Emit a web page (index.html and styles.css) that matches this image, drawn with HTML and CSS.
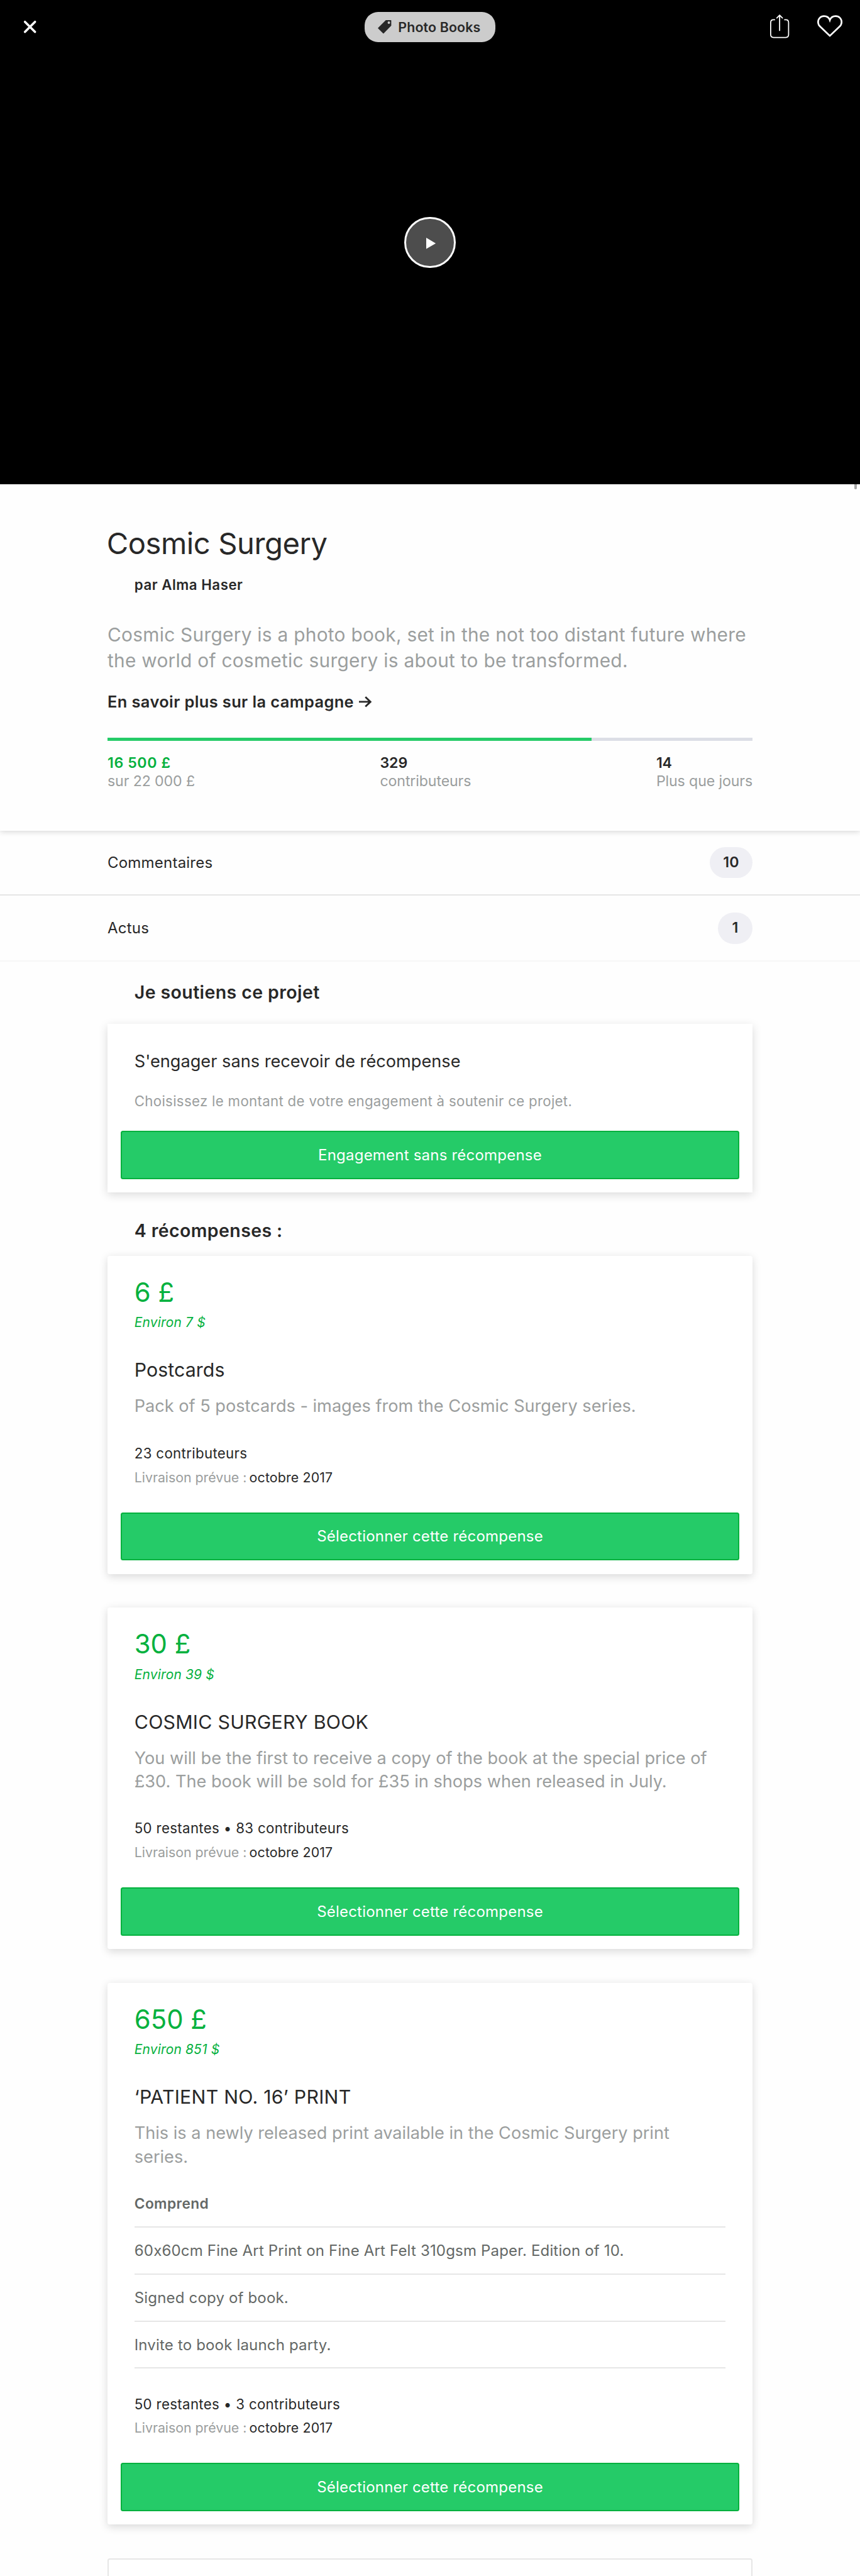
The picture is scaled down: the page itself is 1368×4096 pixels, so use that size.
FILE: index.html
```
<!DOCTYPE html>
<html lang="fr">
<head>
<meta charset="utf-8">
<title>Cosmic Surgery</title>
<link rel="stylesheet" href="styles.css">
</head>
<body>
<header class="hero">
  <nav class="topbar">
    <svg class="icon-close" viewBox="0 0 24 24"><path d="M3 3 21 21M21 3 3 21"/></svg>
    <a class="category">
      <svg class="icon-tag" viewBox="0 0 24 24"><path fill-rule="evenodd" d="M14.3 0H23.4Q24 0 24 .6V9.7L10.6 23.6Q10 24.2 9.3 23.6L.5 15Q-.2 14.3 .5 13.7ZM19.7 2.2A2.2 2.2 0 1 0 19.7 6.6 2.2 2.2 0 1 0 19.7 2.2Z"/></svg>
      <span>Photo Books</span>
    </a>
    <div class="actions">
      <svg class="icon-share" viewBox="0 0 34 42"><path d="M8 9.500H6Q1 9.500 1 14.500V36Q1 41 6 41H28Q33 41 33 36V14.500Q33 9.500 28 9.500H26M17 28.500V1.500M12 6.200 17 1.200 22 6.200"/></svg>
      <svg class="icon-heart" viewBox="0 0 45 39"><path d="M22.500 37 5.500 20.800C1.800 17.300 1.500 14.500 1.500 12.500 1.500 6.500 6 1.800 12 1.800 17 1.800 21 4.500 22.500 9 24 4.500 28 1.800 33 1.800 39 1.800 43.500 6.500 43.500 12.500 43.500 14.500 43.200 17.300 39.500 20.800Z"/></svg>
    </div>
  </nav>
  <button class="play"><svg viewBox="0 0 17 20"><path d="M0 0 17 10 0 20Z"/></svg></button>
  <i class="scroll-thumb"></i>
</header>

<section class="summary">
  <h1 class="title">Cosmic Surgery</h1>
  <p class="author">par Alma Haser</p>
  <p class="blurb">Cosmic Surgery is a photo book, set in the not too distant future where<br>the world of cosmetic surgery is about to be transformed.</p>
  <a class="more">En savoir plus sur la campagne <svg class="icon-arrow" viewBox="0 0 23 20"><path d="M0 10H20M11.500 1.500 20.500 10 11.500 18.500"/></svg></a>
  <div class="progress"><div class="progress-fill" style="width:75%"></div></div>
  <div class="stats">
    <div><b class="raised">16 500 £</b><span class="goal">sur 22 000 £</span></div>
    <div><b>329</b><span>contributeurs</span></div>
    <div><b>14</b><span>Plus que jours</span></div>
  </div>
</section>

<section class="links">
  <a class="link-row"><span>Commentaires</span><b class="count">10</b></a>
  <a class="link-row"><span>Actus</span><b class="count">1</b></a>
</section>

<main class="pledges">
  <h2 class="heading">Je soutiens ce projet</h2>
  <article class="card card-plain">
    <h3 class="plain-title">S'engager sans recevoir de récompense</h3>
    <p class="plain-text">Choisissez le montant de votre engagement à soutenir ce projet.</p>
    <button class="cta">Engagement sans récompense</button>
  </article>

  <h2 class="heading heading-rewards">4 récompenses :</h2>
  <article class="card">
    <p class="amount">6 £</p>
    <p class="approx">Environ 7 $</p>
    <h3 class="name">Postcards</h3>
    <p class="desc">Pack of 5 postcards - images from the Cosmic Surgery series.</p>
    <p class="backers">23 contributeurs</p>
    <p class="delivery"><span>Livraison prévue :</span> <b>octobre 2017</b></p>
    <button class="cta">Sélectionner cette récompense</button>
  </article>

  <article class="card">
    <p class="amount">30 £</p>
    <p class="approx">Environ 39 $</p>
    <h3 class="name name-caps">COSMIC SURGERY BOOK</h3>
    <p class="desc">You will be the first to receive a copy of the book at the special price of<br>£30. The book will be sold for £35 in shops when released in July.</p>
    <p class="backers">50 restantes • 83 contributeurs</p>
    <p class="delivery"><span>Livraison prévue :</span> <b>octobre 2017</b></p>
    <button class="cta">Sélectionner cette récompense</button>
  </article>

  <article class="card">
    <p class="amount">650 £</p>
    <p class="approx">Environ 851 $</p>
    <h3 class="name name-caps">‘PATIENT NO. 16’ PRINT</h3>
    <p class="desc">This is a newly released print available in the Cosmic Surgery print<br>series.</p>
    <h4 class="includes">Comprend</h4>
    <ul class="items">
      <li>60x60cm Fine Art Print on Fine Art Felt 310gsm Paper. Edition of 10.</li>
      <li>Signed copy of book.</li>
      <li>Invite to book launch party.</li>
    </ul>
    <p class="backers">50 restantes • 3 contributeurs</p>
    <p class="delivery"><span>Livraison prévue :</span> <b>octobre 2017</b></p>
    <button class="cta">Sélectionner cette récompense</button>
  </article>

  <article class="card card-next"></article>
</main>
</body>
</html>
```
FILE: styles.css
```
/* 1rem = 10 design pixels */
html { font-size: 8.90625px; }
* { box-sizing: border-box; margin: 0; padding: 0; }
body {
  height: 4096px;
  overflow: hidden;
  background: #fefefe;
  color: #282828;
  font-family: Inter, "Liberation Sans", sans-serif;
}
svg { display: block; fill: none; stroke: #fff; overflow: visible; }
h1, h2, h3 { font-weight: 400; }
button { border: 0; font: inherit; }

.hero {
  position: relative;
  display: flex;
  flex-direction: column;
  align-items: center;
  height: 86.4rem;
  background: #000;
}
.topbar {
  display: grid;
  grid-template-columns: 1fr auto 1fr;
  align-items: center;
  width: 100%;
  height: 9.6rem;
  padding: 0 3.1rem;
}
.icon-close { width: 2.4rem; height: 2.4rem; margin-left: 1.1rem; stroke-width: 4; stroke-linecap: round; }
.category {
  display: flex;
  align-items: center;
  gap: 1.2rem;
  width: 23.4rem;
  height: 5.4rem;
  padding-left: 2.4rem;
  border-radius: 2.4rem;
  background: #ccc;
  font-size: 2.4rem;
  font-weight: 600;
  letter-spacing: .0067em;
  white-space: nowrap;
}
.icon-tag { width: 2.4rem; height: 2.4rem; fill: #282828; stroke: none; }
.actions { display: flex; justify-content: flex-end; align-items: center; gap: 5.1rem; margin-bottom: .2rem; }
.icon-share { width: 3.4rem; height: 4.2rem; stroke-width: 2; stroke-linecap: round; stroke-linejoin: round; }
.icon-heart { width: 4.5rem; height: 3.9rem; stroke-width: 3; }
.play {
  display: flex;
  align-items: center;
  justify-content: center;
  width: 9.1rem;
  height: 9.1rem;
  margin-top: 29.1rem;
  padding: .3rem 0 0 .3rem;
  border: .4rem solid #fff;
  border-radius: 50%;
  background: #4d4d4d;
}
.play svg { width: 1.7rem; height: 2rem; fill: #fff; stroke: none; }
.scroll-thumb {
  position: absolute;
  top: 100%;
  right: .6rem;
  width: .4rem;
  height: 1rem;
  border-radius: 0 0 .2rem .2rem;
  background: #a5a5a5;
}

.summary {
  height: 61.9rem;
  padding: 7.3rem 19.2rem 0;
  box-shadow: 0 .2rem 1rem rgba(0, 0, 0, .17);
  clip-path: inset(0 0 -2rem 0);
}
.title { font-size: 5.3rem; line-height: 6.4rem; letter-spacing: -.0097em; margin-left: -.15rem; }
.author { margin: 2.76rem 0 0 4.8rem; font-size: 2.5rem; line-height: 3.2rem; font-weight: 600; letter-spacing: .0236em; }
.blurb { margin-top: 4.99rem; color: #9b9e9e; font-size: 3.35rem; line-height: 4.6rem; letter-spacing: .0092em; white-space: nowrap; }
.more { display: flex; align-items: center; gap: .9rem; margin-top: 3.27rem; font-size: 2.85rem; line-height: 3.6rem; font-weight: 600; letter-spacing: .0161em; }
.icon-arrow { width: 2.3rem; height: 2rem; stroke: #282828; stroke-width: 3.2; }
.progress { height: .6rem; margin-top: 4.58rem; background: #dcdee6; }
.progress-fill { height: 100%; background: #25cb68; }
.stats { display: flex; justify-content: space-between; margin-top: 2.35rem; color: #9b9e9e; font-size: 2.6rem; line-height: 3.2rem; letter-spacing: -.005em; }
.stats b { display: block; color: #282828; font-weight: 600; }
.stats .raised { color: #05b13e; letter-spacing: .0257em; }

.link-row {
  display: flex;
  align-items: center;
  justify-content: space-between;
  height: 11.6rem;
  padding: 0 19.2rem;
  font-size: 2.7rem;
  letter-spacing: .0083em;
  border-bottom: 2px solid #e6e6e6;
}
.link-row + .link-row { height: 11.8rem; border-color: #f7f7f7; }
.count {
  height: 5.6rem;
  min-width: 6.2rem;
  padding: 0 2.4rem;
  border-radius: 2.8rem;
  background: #efeff4;
  font-size: 2.6rem;
  line-height: 5.6rem;
  font-weight: 600;
  text-align: center;
}

.pledges { padding: 3.44rem 19.2rem 0; }
.heading { margin-left: 4.8rem; font-size: 3.2rem; line-height: 4rem; font-weight: 600; letter-spacing: .014em; }
.heading-rewards { margin-top: 4.8rem; margin-bottom: 2.5rem; }
.card {
  display: flex;
  flex-direction: column;
  margin-bottom: 6rem;
  padding: 3.69rem 2.4rem 2.4rem;
  border-radius: .4rem;
  background: #fff;
  box-shadow: 0 .4rem 1.6rem rgba(0, 0, 0, .15);
}
.card > :not(.cta) { margin-left: 2.4rem; margin-right: 2.4rem; white-space: nowrap; }
.card-plain { height: 30.1rem; margin: 3.66rem 0 0; padding-top: 4.67rem; border-radius: 0; }
.plain-title { font-size: 3.05rem; line-height: 4rem; }
.plain-text { margin-top: 3.59rem; color: #9b9e9e; font-size: 2.5rem; line-height: 3.2rem; letter-spacing: .0138em; }
.cta {
  height: 8.6rem;
  margin-top: auto;
  border: 2px solid #05b13e;
  border-radius: .4rem;
  background: #25cb68;
  color: #fff;
  font-size: 2.7rem;
  letter-spacing: .008em;
}
.amount { color: #05b13e; font-size: 4.7rem; line-height: 5.6rem; }
.approx { margin-top: 1.12rem; color: #05b13e; font-size: 2.35rem; line-height: 3.2rem; font-style: italic; letter-spacing: .009em; }
.name { margin-top: 4.75rem; font-size: 3.4rem; line-height: 4.2rem; letter-spacing: .0033em; }
.name-caps { letter-spacing: .0092em; }
.desc { margin-top: 2.21rem; color: #9b9e9e; font-size: 3.05rem; line-height: 4.2rem; letter-spacing: -.0006em; }
.backers { margin-top: 4.72rem; font-size: 2.5rem; line-height: 3.2rem; letter-spacing: .0152em; }
.delivery { margin-top: 1.04rem; margin-bottom: 4.67rem; font-size: 2.4rem; line-height: 3.2rem; }
.delivery span { color: #9b9e9e; letter-spacing: -.0016em; }
.delivery b { margin-left: -.2rem; font-weight: 400; letter-spacing: .0064em; }
.includes { margin-top: 4.72rem; color: #646866; font-size: 2.55rem; line-height: 3.2rem; font-weight: 600; letter-spacing: .0176em; }
.items { margin-top: 2.41rem; border-top: 2px solid #e6e6e6; list-style: none; color: #646866; font-size: 2.7rem; letter-spacing: .0066em; }
.items li { height: 8.4rem; border-bottom: 2px solid #e6e6e6; line-height: 8.2rem; }
.card-next { height: 20rem; margin: 0; border: 2px solid #e6e6e6; box-shadow: none; }
```
